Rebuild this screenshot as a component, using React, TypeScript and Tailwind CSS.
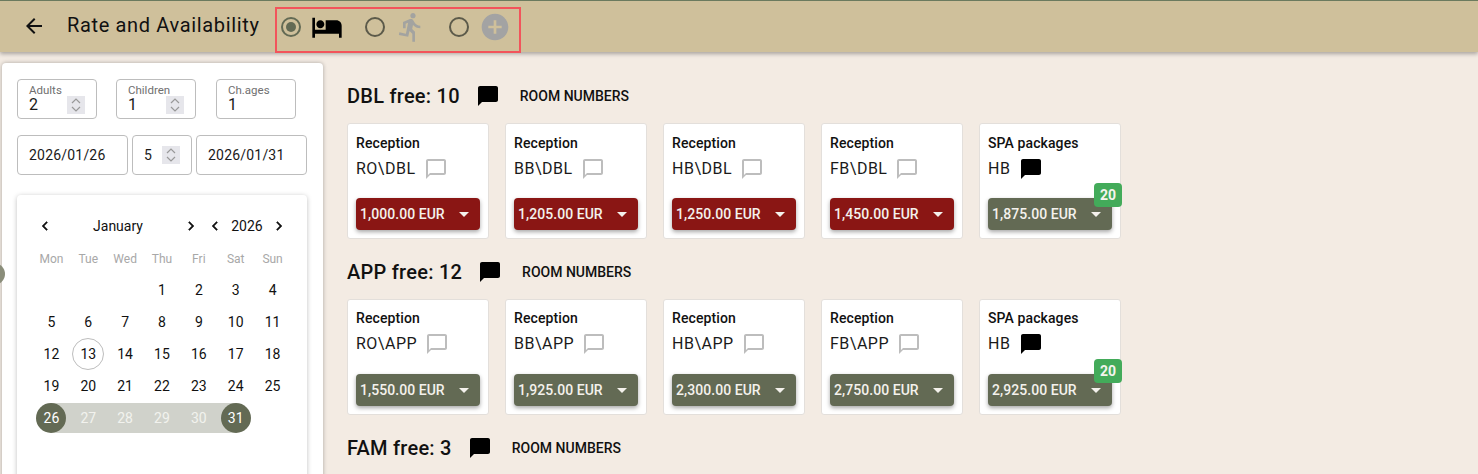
import React from "react";

const P = {
  bubble: "M20 2H4c-1.1 0-2 .9-2 2v18l4-4h14c1.1 0 2-.9 2-2V4c0-1.1-.9-2-2-2z",
  bubbleO: "M20 2H4c-1.1 0-2 .9-2 2v18l4-4h14c1.1 0 2-.9 2-2V4c0-1.1-.9-2-2-2zm0 14H6l-2 2V4h16v12z",
  hotel: "M7 13c1.66 0 3-1.34 3-3S8.66 7 7 7s-3 1.34-3 3 1.34 3 3 3zm12-6h-8v7H3V5H1v15h2v-3h18v3h2v-9c0-2.21-1.79-4-4-4z",
  run: "M13.49 5.48c1.1 0 2-.9 2-2s-.9-2-2-2-2 .9-2 2 .9 2 2 2zm-3.6 13.9l1-4.4 2.1 2v6h2v-7.5l-2.1-2 .6-3c1.3 1.5 3.3 2.5 5.5 2.5v-2c-1.9 0-3.5-1-4.3-2.4l-1-1.6c-.4-.6-1-1-1.7-1-.3 0-.5.1-.8.1l-5.2 2.2v4.7h2v-3.4l1.8-.7-1.6 8.1-4.9-1-.4 2 7 1.4z",
  add: "M12 2C6.48 2 2 6.48 2 12s4.48 10 10 10 10-4.48 10-10S17.52 2 12 2zm5 11h-4v4h-2v-4H7v-2h4V7h2v4h4v2z",
  back: "M20 11H7.83l5.59-5.59L12 4l-8 8 8 8 1.41-1.41L7.83 13H20v-2z",
  left: "M15.41 7.41L14 6l-6 6 6 6 1.41-1.41L10.83 12z",
  right: "M10 6L8.59 7.41 13.17 12l-4.58 4.59L10 18l6-6z",
};

function Ico({ d, size = 24, cls = "" }: { d: string; size?: number; cls?: string }) {
  return (
    <svg viewBox="0 0 24 24" width={size} height={size} className={"shrink-0 fill-current " + cls}>
      <path d={d} />
    </svg>
  );
}

function Radio({ on }: { on?: boolean }) {
  return (
    <span className={"flex h-[20px] w-[20px] shrink-0 items-center justify-center rounded-full border-2 " + (on ? "border-[#636a54]" : "border-[#5c5a4a]")}>
      {on && <span className="h-[10px] w-[10px] rounded-full bg-[#636a54]" />}
    </span>
  );
}

function Spin() {
  return (
    <span className="flex h-[18px] w-[18px] shrink-0 flex-col items-center justify-center bg-[#e6e6eb] text-[#999999]">
      <svg viewBox="0 0 10 16" width="10" height="16" fill="none" stroke="currentColor" strokeWidth="1.2">
        <path d="M1 6l4-4 4 4M1 10l4 4 4-4" />
      </svg>
    </span>
  );
}

function Small({ label, value, spin, w }: { label: string; value: string; spin?: boolean; w: string }) {
  return (
    <div className={"relative h-[40px] rounded-[4px] border border-[#bdbdbd] pl-[11px] pt-[3px] " + w}>
      <div className="text-[11.5px] leading-[14px] text-[#6f6f6f]">{label}</div>
      <div className="text-[16px] leading-[16px] text-[#1a1a1a]">{value}</div>
      {spin && (
        <div className="absolute left-[49px] top-[16px]">
          <Spin />
        </div>
      )}
    </div>
  );
}

function Days() {
  const days: (number | null)[] = [null, null, null];
  for (let i = 1; i <= 31; i++) days.push(i);
  return (
    <div className="grid grid-cols-7">
      {days.map((n, i) => {
        if (n === null) return <div key={i} className="h-[32px]" />;
        const end = n === 26 || n === 31;
        const mid = n > 26 && n < 31;
        return (
          <div key={i} className="flex h-[32px] items-center justify-center">
            <div
              className={
                "flex h-[30px] w-full items-center justify-center text-[14px] " +
                (mid ? "bg-[#d0d2cb] text-[#f2f2ee]" : "") +
                (n === 26 ? " bg-gradient-to-r from-transparent from-50% to-[#d0d2cb] to-50%" : "") +
                (n === 31 ? " bg-gradient-to-r from-[#d0d2cb] from-50% to-transparent to-50%" : "")
              }
            >
              <span
                className={
                  "flex items-center justify-center rounded-full " +
                  (end ? "h-[30px] w-[30px] bg-[#636a54] text-white" : "") +
                  (n === 13 ? "h-[32px] w-[32px] border border-[#bdbdbd] text-[#111]" : "") +
                  (!end && !mid && n !== 13 ? "text-[#111]" : "")
                }
              >
                {n}
              </span>
            </div>
          </div>
        );
      })}
    </div>
  );
}

function Calendar() {
  const chev = "stroke-current stroke-[0.6]";
  return (
    <div className="mt-[20px] h-[300px] w-[290px] rounded-[4px] bg-white px-[16px] pt-[20px] shadow-[0_1px_5px_rgba(0,0,0,0.25)]">
      <div className="flex h-[22px] items-center text-[14px] text-[#111]">
        <div className="flex w-[24px] justify-center"><Ico d={P.left} size={18} cls={chev} /></div>
        <div className="w-[127px] pr-[5px] text-center">January</div>
        <div className="ml-[-5px] flex w-[24px] justify-center"><Ico d={P.right} size={18} cls={chev} /></div>
        <div className="flex w-[24px] justify-center"><Ico d={P.left} size={18} cls={chev} /></div>
        <div className="w-[40px] text-center">2026</div>
        <div className="flex w-[24px] justify-center"><Ico d={P.right} size={18} cls={chev} /></div>
      </div>
      <div className="mt-[11px] grid h-[22px] grid-cols-7 items-center text-center text-[12px] text-[#a8a8a8]">
        {["Mon", "Tue", "Wed", "Thu", "Fri", "Sat", "Sun"].map((d) => (
          <div key={d}>{d}</div>
        ))}
      </div>
      <div className="mt-[4px]">
        <Days />
      </div>
    </div>
  );
}

type Item = { top: string; name: string; price: string; red?: boolean; filled?: boolean; badge?: boolean; gap: string };

function Card({ it, up }: { it: Item; up?: boolean }) {
  return (
    <div className={"relative h-[116px] w-[142px] rounded-[3px] border border-[#e3dfdb] bg-white px-[8px] " + (up ? "pt-[9px]" : "pt-[10px]")}>
      <div className="text-[14px] font-medium leading-[18px] tracking-[0.1px] text-[#111]">{it.top}</div>
      <div className="mt-[5px] flex h-[24px] items-center text-[16px] leading-[24px] tracking-[0.5px] text-[#1a1a1a]">
        <span>{it.name}</span>
        <span className={it.gap}>
          <Ico d={it.filled ? P.bubble : P.bubbleO} cls={it.filled ? "text-black" : "text-[#bdbdbd]"} />
        </span>
      </div>
      <div
        className={
          "flex h-[32px] w-[124px] items-center justify-between rounded-[4px] pl-[4px] pr-[10px] text-[14px] font-medium tracking-[0.05px] text-[#f4f1ec] shadow-[0_2px_4px_rgba(0,0,0,0.35)] " +
          (up ? "mt-[18px] " : "mt-[17px] ") +
          (it.red ? "bg-[#8a1614]" : "bg-[#636a54]")
        }
      >
        <span>{it.price}</span>
        <svg viewBox="0 0 10 5" width="10" height="5" className="mr-[1px] fill-current"><path d="M0 0h10L5 5z" /></svg>
      </div>
      {it.badge && (
        <div className="absolute left-[114px] top-[59px] flex h-[24px] w-[28px] items-center justify-center rounded-[4px] bg-[#43ab5a] text-[14px] font-bold text-[#f4f4ee]">
          20
        </div>
      )}
    </div>
  );
}

function Title({ text }: { text: string }) {
  return (
    <div className="flex h-[24px] items-center text-[#111]">
      <span className="text-[20px] font-medium tracking-[0.25px]">{text}</span>
      <span className="ml-[16px]"><Ico d={P.bubble} cls="text-black" /></span>
      <span className="ml-[20px] text-[14px] font-medium">ROOM NUMBERS</span>
    </div>
  );
}

const dbl: Item[] = [
  { top: "Reception", name: "RO\\DBL", price: "1,000.00 EUR", red: true, gap: "ml-[8px]" },
  { top: "Reception", name: "BB\\DBL", price: "1,205.00 EUR", red: true, gap: "ml-[8px]" },
  { top: "Reception", name: "HB\\DBL", price: "1,250.00 EUR", red: true, gap: "ml-[8px]" },
  { top: "Reception", name: "FB\\DBL", price: "1,450.00 EUR", red: true, gap: "ml-[8px]" },
  { top: "SPA packages", name: "HB", price: "1,875.00 EUR", filled: true, badge: true, gap: "ml-[9px]" },
];
const app: Item[] = [
  { top: "Reception", name: "RO\\APP", price: "1,550.00 EUR", gap: "ml-[8px]" },
  { top: "Reception", name: "BB\\APP", price: "1,925.00 EUR", gap: "ml-[8px]" },
  { top: "Reception", name: "HB\\APP", price: "2,300.00 EUR", gap: "ml-[8px]" },
  { top: "Reception", name: "FB\\APP", price: "2,750.00 EUR", gap: "ml-[8px]" },
  { top: "SPA packages", name: "HB", price: "2,925.00 EUR", filled: true, badge: true, gap: "ml-[9px]" },
];

function Row({ items, up }: { items: Item[]; up?: boolean }) {
  return (
    <div className="mt-[15px] flex gap-[16px]">
      {items.map((it) => (
        <Card key={it.name + it.price} it={it} up={up} />
      ))}
    </div>
  );
}

export default function App() {
  return (
    <div className="relative h-[474px] w-[1478px] overflow-hidden bg-[#f3ebe3] font-['Roboto',sans-serif]">
      <header className="relative z-10 flex h-[52px] items-start border-t-[1px] border-[#6b7a5e] bg-[#cfc09b] shadow-[0_2px_4px_rgba(0,0,0,0.3)]">
        <div className="ml-[22px] mt-[13px] text-[#111]"><Ico d={P.back} /></div>
        <div className="ml-[21px] mt-[10px] w-[192px] whitespace-nowrap text-[20px] leading-[28px] tracking-[0.65px] text-[#111]">Rate and Availability</div>
        <div className="ml-[16px] mt-[6px] flex h-[46px] w-[246px] items-center border-2 border-[#f2545b] pb-[7px] pl-[4px]">
          <Radio on />
          <span className="ml-[10px] text-black"><Ico d={P.hotel} size={32} /></span>
          <span className="ml-[22px]"><Radio /></span>
          <span className="ml-[10px] text-[#a3a3a0]"><Ico d={P.run} size={32} /></span>
          <span className="ml-[22px]"><Radio /></span>
          <span className="ml-[10px] text-[#a3a3a3]"><Ico d={P.add} size={32} /></span>
        </div>
      </header>

      <div className="flex">
        <aside className="ml-[2px] mt-[11px] h-[420px] w-[321px] shrink-0 rounded-t-[4px] bg-white pl-[15px] pt-[16px] shadow-[0_0_4px_rgba(0,0,0,0.3)]">
          <div className="flex">
            <Small label="Adults" value="2" spin w="w-[80px]" />
            <div className="ml-[19px]"><Small label="Children" value="1" spin w="w-[80px]" /></div>
            <div className="ml-[20px]"><Small label="Ch.ages" value="1" w="w-[80px]" /></div>
          </div>
          <div className="mt-[16px] flex gap-[4px] text-[14px] tracking-[0.2px] text-[#1a1a1a]">
            <div className="flex h-[40px] w-[111px] items-center rounded-[4px] border border-[#bdbdbd] pl-[11px]">2026/01/26</div>
            <div className="flex h-[40px] w-[60px] items-center justify-between rounded-[4px] border border-[#bdbdbd] pl-[11px] pr-[11px]">5<Spin /></div>
            <div className="flex h-[40px] w-[111px] items-center rounded-[4px] border border-[#bdbdbd] pl-[11px]">2026/01/31</div>
          </div>
          <Calendar />
        </aside>

        <main className="ml-[24px] mt-[32px]">
          <Title text="DBL free: 10" />
          <Row items={dbl} />
          <div className="mt-[21px]"><Title text="APP free: 12" /></div>
          <Row items={app} up />
          <div className="mt-[21px]"><Title text="FAM free: 3" /></div>
        </main>
      </div>

      <div className="absolute left-[-17px] top-[263px] h-[22px] w-[22px] rounded-full bg-[#8a8d7a]" />
    </div>
  );
}
